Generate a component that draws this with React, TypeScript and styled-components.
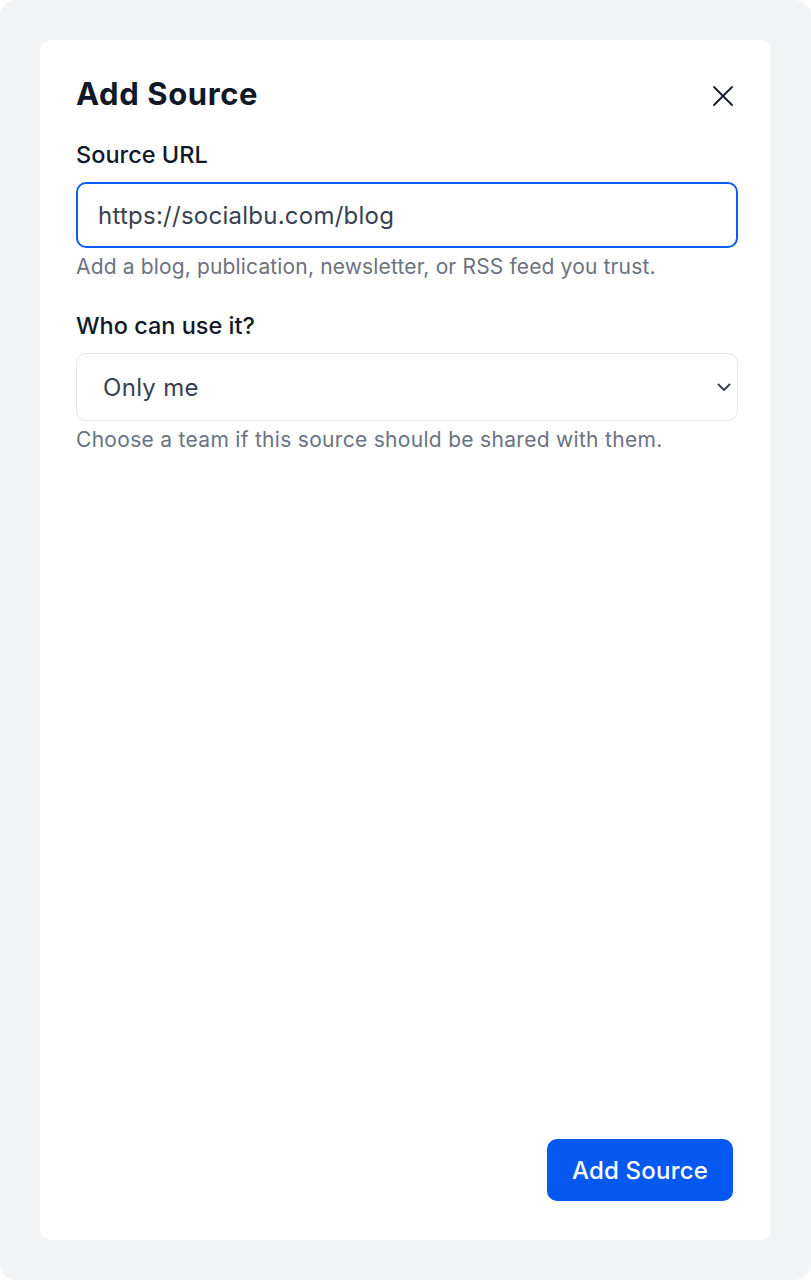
import React, { useState } from "react";
import styled, { createGlobalStyle } from "styled-components";

const GlobalStyle = createGlobalStyle`
  html, body {
    margin: 0;
    padding: 0;
    background: #ffffff;
  }
  body {
    font-family: "Inter", "Liberation Sans", sans-serif;
  }
  * {
    box-sizing: border-box;
  }
`;

const Page = styled.div`
  width: 811px;
  height: 1280px;
  padding: 40px;
  background: #f2f3f5;
  border-radius: 16px;
  display: flex;
`;

const Card = styled.div`
  flex: 1;
  display: flex;
  flex-direction: column;
  background: #ffffff;
  border-radius: 10px;
  padding: 30px 33px 39px 36px;
`;

const Header = styled.div`
  display: flex;
  align-items: center;
  justify-content: space-between;
  height: 46px;
`;

const Title = styled.h2`
  margin: 0;
  font-size: 31px;
  font-weight: 650;
  color: #111827;
  letter-spacing: 0.6px;
`;

const CloseButton = styled.button`
  display: flex;
  align-items: center;
  justify-content: center;
  width: 28px;
  height: 28px;
  margin-right: 1px;
  margin-top: 6px;
  padding: 0;
  border: none;
  background: transparent;
  color: #111827;
  cursor: pointer;
`;

const Field = styled.div<{ $gap?: number }>`
  display: flex;
  flex-direction: column;
  margin-top: ${(p) => p.$gap ?? 0}px;
`;

const Label = styled.label`
  font-size: 23.5px;
  font-weight: 500;
  color: #111827;
  line-height: 30px;
  margin-bottom: 12px;
`;

const TextInput = styled.input`
  width: 100%;
  height: 66px;
  padding: 0 20px;
  font-family: inherit;
  font-size: 24px;
  letter-spacing: 0.25px;
  color: #374151;
  border: 2px solid #0b5cf2;
  border-radius: 10px;
  outline: none;
  caret-color: #111827;
`;

const SelectWrap = styled.div`
  position: relative;
`;

const Select = styled.select`
  width: 100%;
  height: 68px;
  padding: 0 26px;
  font-family: inherit;
  font-size: 24px;
  letter-spacing: 0.3px;
  color: #374151;
  background: #ffffff;
  border: 1px solid #e5e7eb;
  border-radius: 10px;
  appearance: none;
  outline: none;
`;

const Chevron = styled.span`
  position: absolute;
  right: 1px;
  top: 50%;
  transform: translateY(-50%);
  display: flex;
  color: #374151;
  pointer-events: none;
`;

const Hint = styled.p<{ $spacing?: number }>`
  margin: 6px 0 0;
  font-size: 21px;
  letter-spacing: ${(p) => p.$spacing ?? 0.15}px;
  color: #6b7280;
  line-height: 26px;
`;

const Spacer = styled.div`
  flex: 1;
`;

const Footer = styled.div`
  display: flex;
  justify-content: flex-end;
  padding-right: 5px;
`;

const PrimaryButton = styled.button`
  height: 62px;
  padding: 0 25px;
  font-family: inherit;
  font-size: 24px;
  font-weight: 500;
  letter-spacing: 0.2px;
  color: #ffffff;
  background: #0559f0;
  border: none;
  border-radius: 10px;
  cursor: pointer;
`;

export default function App() {
  const [url, setUrl] = useState("https://socialbu.com/blog");
  const [team, setTeam] = useState("me");

  return (
    <>
      <GlobalStyle />
      <Page>
        <Card>
          <Header>
            <Title>Add Source</Title>
            <CloseButton aria-label="Close">
              <svg width="24" height="24" viewBox="0 0 24 24" fill="none" stroke="currentColor" strokeWidth="1.8" strokeLinecap="round">
                <path d="M3 3L21 21M21 3L3 21" />
              </svg>
            </CloseButton>
          </Header>

          <Field $gap={24}>
            <Label>Source URL</Label>
            <TextInput autoFocus value={url} onChange={(e) => setUrl(e.target.value)} />
            <Hint>Add a blog, publication, newsletter, or RSS feed you trust.</Hint>
          </Field>

          <Field $gap={31}>
            <Label>Who can use it?</Label>
            <SelectWrap>
              <Select value={team} onChange={(e) => setTeam(e.target.value)}>
                <option value="me">Only me</option>
              </Select>
              <Chevron>
                <svg width="26" height="26" viewBox="0 0 26 26" fill="none" stroke="currentColor" strokeWidth="1.9" strokeLinecap="round" strokeLinejoin="round">
                  <path d="M7.5 10.5l5.5 5.5 5.5-5.5" />
                </svg>
              </Chevron>
            </SelectWrap>
            <Hint $spacing={0.3}>Choose a team if this source should be shared with them.</Hint>
          </Field>

          <Spacer />

          <Footer>
            <PrimaryButton>Add Source</PrimaryButton>
          </Footer>
        </Card>
      </Page>
    </>
  );
}
